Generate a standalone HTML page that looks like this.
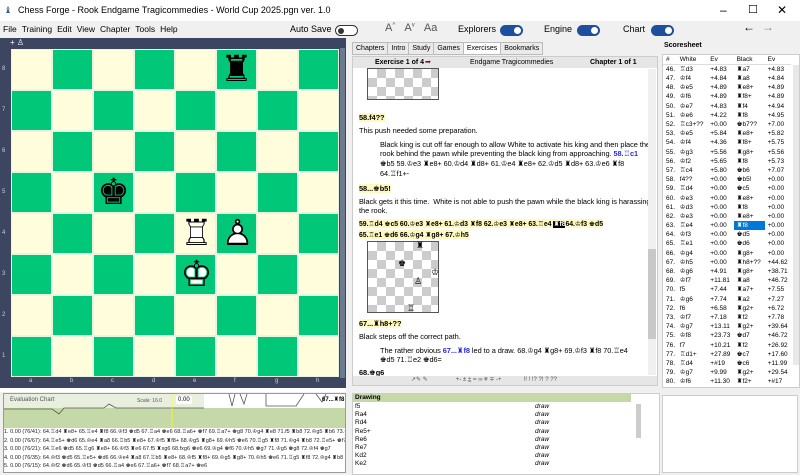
<!DOCTYPE html>
<html><head><meta charset="utf-8"><style>
*{box-sizing:border-box;margin:0;padding:0}
body{width:800px;height:475px;overflow:hidden;background:#f0f0f0;font-family:"Liberation Sans","DejaVu Sans",sans-serif;font-size:8px;color:#000;position:relative}
.abs{position:absolute}
.title{left:0;top:0;width:800px;height:21px;background:#fff;font-size:9px;line-height:21px;padding-left:18px}
.menu{left:0;top:21px;width:800px;height:17px;background:#f0f0f0;font-size:8.5px;line-height:17px}
.menu span{margin-left:3px;margin-right:2px}
.tog{position:absolute;width:23px;height:11px;border-radius:6px;background:#1d4f9c}
.tog:after{content:"";position:absolute;right:2px;top:2px;width:7px;height:7px;border-radius:50%;background:#fff}
.sq{position:absolute;width:41px;height:41px;border:0.5px solid #e8f5e0;font-family:"DejaVu Sans",sans-serif;font-size:36px;line-height:40px;text-align:center}
.sq i{font-style:normal;position:absolute;left:0;top:0;width:41px;color:#fff}
.sq b{font-weight:normal;position:absolute;left:0;top:0;width:41px}
.l{background:#fffddb}.d{background:#00c878}
.tabs{left:352px;top:42px;height:14px;font-size:7px}
.tabs span{display:inline-block;border:1px solid #bbb;padding:2px 3px;background:#eaeaea;margin-right:-1px}
.cont{left:352px;top:56px;width:306px;height:330px;background:#fff;border:1px solid #ccc;overflow:hidden}
.cont p{font-size:7.4px;line-height:9.8px;white-space:nowrap;letter-spacing:-0.05px}
.hl{background:#fff8c0;font-weight:bold}
.mini{position:absolute;width:72px;height:72px;border:1px solid #555;background-image:conic-gradient(#ccc 25%,#fff 0 50%,#ccc 0 75%,#fff 0);background-size:18px 18px}
table{border-collapse:collapse}
.ss td{height:9.2px;font-size:6.5px;line-height:9px;padding:0 0 0 3px;white-space:nowrap}
g{font-size:7.3px;line-height:9.8px}
g.s{font-size:6.9px}
</style></head><body>
<div class="abs title">Chess Forge - Rook Endgame Tragicommedies - World Cup 2025.pgn ver. 1.0<span class="abs" style="left:4px;top:0;color:#3a5a9a">♝</span><span class="abs" style="left:720px;top:0;font-size:12px">–</span><span class="abs" style="left:748px;top:0;font-size:11px">☐</span><span class="abs" style="left:777px;top:0;font-size:12px">✕</span></div>
<div class="abs menu"><span>File</span><span>Training</span><span>Edit</span><span>View</span><span>Chapter</span><span>Tools</span><span>Help</span></div>
<div class="abs" style="left:290px;top:24px;font-size:9px">Auto Save</div>
<div class="abs" style="left:335px;top:25px;width:23px;height:11px;border:1px solid #333;border-radius:6px;background:#fff"><div style="position:absolute;left:2px;top:1.5px;width:6px;height:6px;border-radius:50%;background:#333"></div></div>
<div class="abs" style="left:385px;top:22px;font-size:11px;color:#555">A<sup style="font-size:6px">^</sup>&nbsp;&nbsp;&nbsp;A<sup style="font-size:6px">v</sup>&nbsp;&nbsp;&nbsp;Aa</div>
<div class="abs" style="left:458px;top:24px;font-size:9px">Explorers</div><div class="tog" style="left:500px;top:25px"></div>
<div class="abs" style="left:544px;top:24px;font-size:9px">Engine</div><div class="tog" style="left:577px;top:25px"></div>
<div class="abs" style="left:623px;top:24px;font-size:9px">Chart</div><div class="tog" style="left:651px;top:25px"></div>
<div class="abs" style="left:743px;top:20px;font-size:12px">←</div><div class="abs" style="left:762px;top:20px;font-size:12px;color:#888">→</div>

<div class="abs" style="left:0;top:38px;width:346px;height:350px;background:#3d4660"></div>
<div class="abs" style="left:340px;top:48px;width:5px;height:330px;background:#6e7a90"></div>
<div class="abs" style="left:10px;top:38px;color:#fff;font-size:8px">+ ♙</div>
<div id="board"></div>
<div class="abs" style="left:0;top:388px;width:346px;height:4px;background:#fff"></div>

<div class="abs tabs"><span>Chapters</span><span>Intro</span><span>Study</span><span>Games</span><span style="background:#fff">Exercises</span><span>Bookmarks</span></div>
<div class="abs cont">
<div style="height:11px;background:#e6e6e6;font-size:7px;line-height:11px;position:relative"><b style="position:absolute;left:22px">Exercise 1 of 4</b><span style="position:absolute;left:72px;color:#8b1010">➡</span><span style="position:absolute;left:117px">Endgame Tragicommedies</span><b style="position:absolute;left:237px">Chapter 1 of 1</b></div>
<div class="mini" style="left:14px;top:11px;height:32px;width:72px"></div>
<div style="position:absolute;left:6px;top:56px;width:294px">
<p><span class="hl">58.f4??</span></p>
<p style="margin-top:3px">This push needed some preparation.</p>
<p style="margin:4px 0 0 21px">Black king is cut off far enough to allow White to activate his king and then place the<br>rook behind the pawn while preventing the black king from approaching. <b style="color:#2a2ae0"><g>58.♖c1</g></b><br><g>♚b5 59.♔e3 ♜e8+ 60.♔d4 ♜d8+ 61.♔e4 ♜e8+ 62.♔d5 ♜d8+ 63.♔e6 ♜f8</g><br><g>64.♖f1+-</g></p>
<p style="margin-top:5px"><span class="hl">58...♚b5!</span></p>
<p style="margin-top:3px">Black gets it this time.&nbsp; White is not able to push the pawn while the black king is harassing<br>the rook.</p>
<p style="margin-top:3px"><span class="hl"><g class="s">59.♖d4 ♚c5 60.♔e3 ♜e8+ 61.♔d3 ♜f8 62.♔e3 ♜e8+ 63.♖e4 <span style="background:#000;color:#fff">♜f8</span>64.♔f3 ♚d5</g></span><br><span class="hl"><g class="s">65.♖e1 ♚d6 66.♔g4 ♜g8+ 67.♔h5</g></span></p>
</div>
<div class="mini" style="left:14px;top:184px"><span style="position:absolute;left:48px;top:-2px;font-size:9px">♜</span><span style="position:absolute;left:30px;top:16px;font-size:9px">♚</span><span style="position:absolute;left:63px;top:25px;font-size:9px">♔</span><span style="position:absolute;left:46px;top:34px;font-size:9px">♙</span><span style="position:absolute;left:39px;top:61px;font-size:9px">♖</span></div>
<div style="position:absolute;left:6px;top:262px;width:294px">
<p><span class="hl">67...♜h8+??</span></p>
<p style="margin-top:3px">Black steps off the correct path.</p>
<p style="margin:4px 0 0 21px">The rather obvious <b style="color:#2a2ae0">67...♜f8</b> led to a draw. <g>68.♔g4 ♜g8+ 69.♔f3 ♜f8 70.♖e4</g><br><g>♚d5 71.♖e2 ♚d6=</g></p>
<p style="margin-top:3px"><b>68.♚g6</b></p>
</div>
<div style="position:absolute;left:0;bottom:0;width:304px;height:9px;background:#e6e6e6;font-size:6px;line-height:9px;color:#555"><span style="margin-left:58px">↗✎ ✎</span><span style="margin-left:28px">+- ± ⩲ = ∞ ⩱ ∓ -+</span><span style="margin-left:22px">!! ! !? ?! ? ??</span></div>
<div style="position:absolute;right:1px;top:12px;width:8px;height:306px;background:#f0f0f0"><div style="margin-top:180px;height:90px;background:#c8c8c8"></div></div>
</div>

<div class="abs" style="left:664px;top:42px;font-size:7px;font-weight:bold">Scoresheet</div>
<div class="abs" style="left:662px;top:54px;width:138px;height:334px;background:#fff;border:1px solid #ccc;overflow:hidden">
<table class="ss" id="ss" style="width:128px"></table>
<div style="position:absolute;right:0;top:10px;width:6px;height:300px;background:#e8e8e8"></div>
</div>

<div class="abs" style="left:3px;top:393px;width:343px;height:80px;background:#fff;border:1px solid #999"></div>
<div class="abs" style="left:4px;top:394px;width:341px;height:34px;background:#c5d9a8;overflow:hidden">
<svg width="341" height="34" style="position:absolute;left:0;top:0"><rect x="0" y="0" width="200" height="14" fill="#e8efdf"/><rect x="200" y="0" width="141" height="14" fill="#fff"/><polyline points="0,15 48,15 55,20 60,14 100,14 105,10 112,14 200,14" fill="none" stroke="#555" stroke-width=".8"/><path d="M225 0 L228 12 L231 0 M236 0 L240 10 L243 0 M262 0 L262 12 L292 12 L300 0 M312 0 L318 8 L322 0" fill="none" stroke="#555" stroke-width=".8"/><line x1="168" y1="0" x2="168" y2="34" stroke="#ff0" stroke-width=".8"/></svg>
<span style="position:absolute;left:6px;top:3px;font-size:6px;color:#555">Evaluation Chart</span><span style="position:absolute;left:133px;top:4px;font-size:5px;color:#555">Scale: 16.0</span><span style="position:absolute;left:172px;top:2px;font-size:6px;background:#fff;padding:1px 2px">0.00</span><span style="position:absolute;left:318px;top:2px;font-size:6px;font-weight:bold">67...♜f8</span>
</div>
<div class="abs" style="left:4px;top:428px;width:341px;height:44px;font-size:5.5px;line-height:8.6px;white-space:nowrap;overflow:hidden;color:#222">
1. 0.00 (76/41): 64.♖d4 ♜e8+ 65.♖e4 ♜f8 66.♔f3 ♚d5 67.♖a4 ♚e6 68.♖a6+ ♚f7 69.♖a7+ ♚g8 70.♔g4 ♜e8 71.f5 ♜b8 72.♔g5 ♜b6 73.♔f4<br>2. 0.00 (76/67): 64.♖e5+ ♚d6 65.♔e4 ♜a8 66.♖b5 ♜e8+ 67.♔f5 ♜f8+ 68.♔g5 ♜g8+ 69.♔h5 ♚e6 70.♖g5 ♜f8 71.♔g4 ♜b8 72.♖e5+ ♚f7 73.<br>3. 0.00 (76/21): 64.♖e6 ♚d5 65.♖g6 ♜e8+ 66.♔f3 ♜e6 67.f5 ♜xg6 68.fxg6 ♚e6 69.♔g4 ♚f6 70.♔h5 ♚g7 71.♔g5 ♚g8 72.♔f4 ♚g7<br>4. 0.00 (76/35): 64.♔f3 ♚d5 65.♖e5+ ♚d6 66.♔e4 ♜a8 67.♖b5 ♜e8+ 68.♔f5 ♜f8+ 69.♔g5 ♜g8+ 70.♔h5 ♚e6 71.♖g5 ♜f8 72.♔g4 ♜b8 73.<br>5. 0.00 (76/15): 64.♔f2 ♚d6 65.♔f3 ♚d5 66.♖a4 ♚e6 67.♖a6+ ♚f7 68.♖a7+ ♚e6
</div>
<div class="abs" style="left:352px;top:393px;width:308px;height:82px;background:#fff;border:1px solid #ccc;font-size:6.5px;line-height:8.2px">
<div style="background:#c5d9a8;width:278px;font-weight:bold;padding-left:2px">Drawing</div>
<div style="position:absolute;left:2px;top:9px">f5<br>Ra4<br>Rd4<br>Re5+<br>Re6<br>Re7<br>Kd2<br>Ke2</div>
<div style="position:absolute;left:182px;top:9px;font-style:italic">draw<br>draw<br>draw<br>draw<br>draw<br>draw<br>draw<br>draw</div>
<div style="position:absolute;left:283px;top:10px;width:5px;height:34px;background:#ccc"></div>
</div>
<div class="abs" style="left:662px;top:395px;width:136px;height:78px;background:#fff;border:1px solid #ccc"></div>

<script>
var b=document.getElementById('board'),h='';
var P={'f8':'♜','c5':'♚','e4':'W♜♖','f4':'W♟♙','e3':'W♚♔'};
for(var r=0;r<8;r++)for(var c=0;c<8;c++){var k='abcdefgh'[c]+(8-r),p=P[k]||'';if(p[0]=='W')p='<i>'+p[1]+'</i><b>'+p[2]+'</b>';h+='<div class="sq '+((r+c)%2?'d':'l')+'" style="left:'+(11+41*c)+'px;top:'+(49+41*r)+'px">'+p+'</div>';}
for(var i=0;i<8;i++){h+='<div class="abs" style="left:2px;top:'+(66+41*i)+'px;color:#ccc;font-size:6px">'+(8-i)+'</div>';h+='<div class="abs" style="left:'+(29+41*i)+'px;top:378px;color:#ccc;font-size:6px">'+'abcdefgh'[i]+'</div>';}
b.innerHTML=h;
var rows=[["♖d3","+4.83","♜a7","+4.83"],["♔f4","+4.84","♜a8","+4.84"],["♔e5","+4.89","♜e8+","+4.89"],["♔f6","+4.89","♜f8+","+4.89"],["♔e7","+4.83","♜f4","+4.94"],["♔e6","+4.22","♜f8","+4.95"],["♖c3+??","+0.00","♚b7??","+7.00"],["♔e5","+5.84","♜e8+","+5.82"],["♔f4","+4.36","♜f8+","+5.75"],["♔g3","+5.56","♜g8+","+5.56"],["♔f2","+5.65","♜f8","+5.73"],["♖c4","+5.80","♚b6","+7.07"],["f4??","+0.00","♚b5!","+0.00"],["♖d4","+0.00","♚c5","+0.00"],["♔e3","+0.00","♜e8+","+0.00"],["♔d3","+0.00","♜f8","+0.00"],["♔e3","+0.00","♜e8+","+0.00"],["♖e4","+0.00","♜f8","+0.00"],["♔f3","+0.00","♚d5","+0.00"],["♖e1","+0.00","♚d6","+0.00"],["♔g4","+0.00","♜g8+","+0.00"],["♔h5","+0.00","♜h8+??","+44.62"],["♔g6","+4.91","♜g8+","+38.71"],["♔f7","+11.81","♜a8","+46.72"],["f5","+7.44","♜a7+","+7.55"],["♔g6","+7.74","♜a2","+7.27"],["f6","+6.58","♜g2+","+6.72"],["♔f7","+7.18","♜f2","+7.78"],["♔g7","+13.11","♜g2+","+39.64"],["♔f8","+23.73","♚d7","+46.72"],["f7","+10.21","♜f2","+26.92"],["♖d1+","+27.89","♚c7","+17.60"],["♖d4","+#19","♚c6","+11.99"],["♔g7","+9.99","♜g2+","+29.54"],["♔f6","+11.30","♜f2+","+#17"]];
var t='<tr style="border-bottom:1px solid #ddd"><td>#</td><td>White</td><td>Ev</td><td>Black</td><td>Ev</td></tr>';
rows.forEach(function(x,i){var s=(i==17)?' style="background:#0078d7;color:#fff"':'';t+='<tr><td>'+(46+i)+'.</td><td>'+x[0]+'</td><td>'+x[1]+'</td><td'+s+'>'+x[2]+'</td><td>'+x[3]+'</td></tr>';});
document.getElementById('ss').innerHTML=t;
</script>
</body></html>
